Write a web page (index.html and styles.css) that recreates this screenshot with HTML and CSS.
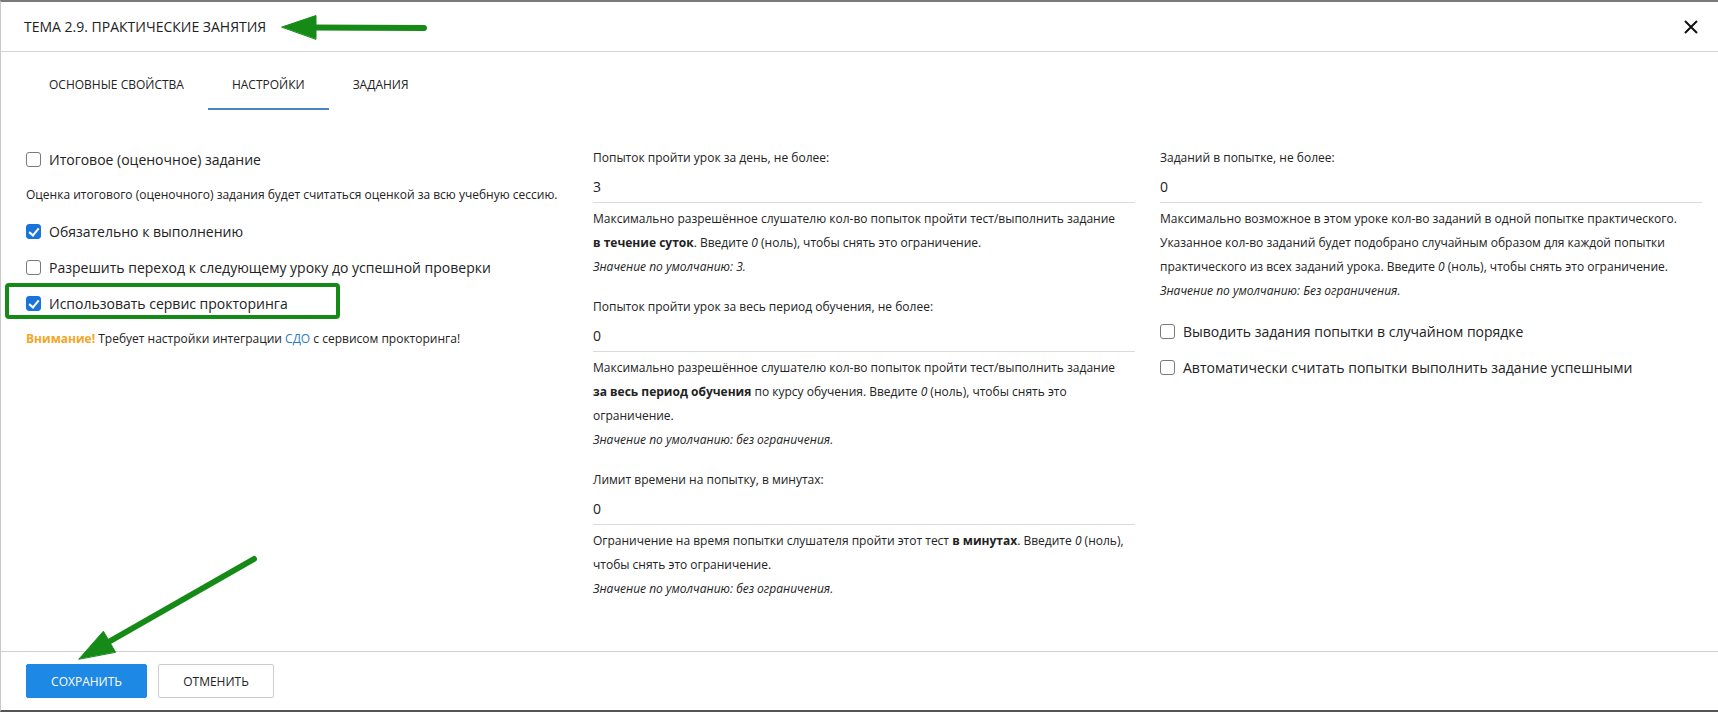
FILE: index.html
```html
<!DOCTYPE html>
<html>
<head>
    <title>Тема 2.9. Практические занятия</title>
    <link rel="stylesheet" href="styles.css">
</head>
<body>
<div class="modal">
    <div class="modal-header">
        <h2>Тема 2.9. Практические занятия</h2>
        <button class="close" type="button">
            <svg width="14" height="14" viewBox="0 0 14 14"><path d="M1 1L13 13M13 1L1 13" stroke="#111" stroke-width="2" fill="none"/></svg>
        </button>
    </div>

    <div class="tabs">
        <div class="tab">Основные свойства</div>
        <div class="tab active">Настройки</div>
        <div class="tab">Задания</div>
    </div>

    <div class="modal-body">
        <div class="col col-left">
            <label class="check"><span class="box"></span>Итоговое (оценочное) задание</label>
            <p class="note">Оценка итогового (оценочного) задания будет считаться оценкой за всю учебную сессию.</p>
            <label class="check"><span class="box checked"></span>Обязательно к выполнению</label>
            <label class="check"><span class="box"></span>Разрешить переход к следующему уроку до успешной проверки</label>
            <label class="check"><span class="box checked"></span>Использовать сервис прокторинга</label>
            <p class="note"><b class="warn">Внимание!</b> Требует настройки интеграции <a href="#">СДО</a> с сервисом прокторинга!</p>
        </div>

        <div class="col">
            <div class="field">
                <div class="field-label">Попыток пройти урок за день, не более:</div>
                <div class="field-value">3</div>
                <div class="field-help">Максимально разрешённое слушателю кол-во попыток пройти тест/выполнить задание <b>в течение суток</b>. Введите <i>0</i> (ноль), чтобы снять это ограничение.</div>
                <div class="field-default">Значение по умолчанию: 3.</div>
            </div>
            <div class="field">
                <div class="field-label">Попыток пройти урок за весь период обучения, не более:</div>
                <div class="field-value">0</div>
                <div class="field-help">Максимально разрешённое слушателю кол-во попыток пройти тест/выполнить задание <b>за весь период обучения</b> по курсу обучения. Введите <i>0</i> (ноль), чтобы снять это ограничение.</div>
                <div class="field-default">Значение по умолчанию: без ограничения.</div>
            </div>
            <div class="field">
                <div class="field-label">Лимит времени на попытку, в минутах:</div>
                <div class="field-value">0</div>
                <div class="field-help">Ограничение на время попытки слушателя пройти этот тест <b>в минутах</b>. Введите <i>0</i> (ноль), чтобы снять это ограничение.</div>
                <div class="field-default">Значение по умолчанию: без ограничения.</div>
            </div>
        </div>

        <div class="col">
            <div class="field">
                <div class="field-label">Заданий в попытке, не более:</div>
                <div class="field-value">0</div>
                <div class="field-help">Максимально возможное в этом уроке кол-во заданий в одной попытке практического. Указанное кол-во заданий будет подобрано случайным образом для каждой попытки практического из всех заданий урока. Введите <i>0</i> (ноль), чтобы снять это ограничение.</div>
                <div class="field-default">Значение по умолчанию: Без ограничения.</div>
            </div>
            <div class="checks">
                <label class="check"><span class="box"></span>Выводить задания попытки в случайном порядке</label>
                <label class="check"><span class="box"></span>Автоматически считать попытки выполнить задание успешными</label>
            </div>
        </div>
    </div>

    <div class="modal-footer">
        <button class="btn btn-primary" type="button">Сохранить</button>
        <button class="btn" type="button">Отменить</button>
    </div>

    <!-- pointer marks drawn on top of the dialog -->
    <svg class="marks" width="1718" height="712" viewBox="0 0 1718 712">
        <g fill="#168a16" stroke="#168a16" stroke-linecap="round" stroke-linejoin="round">
            <line x1="424" y1="28" x2="310" y2="27.5" stroke-width="6"/>
            <polygon points="282,27 316,15.5 316,39" stroke-width="1"/>
            <line x1="254" y1="559" x2="105" y2="644" stroke-width="6"/>
            <polygon points="79,659 103.4,631.2 115.4,652" stroke-width="1"/>
        </g>
        <rect x="7" y="285" width="331" height="32" rx="2" fill="none" stroke="#168a16" stroke-width="4"/>
    </svg>
</div>
</body>
</html>
```

FILE: styles.css
```css
body {
    margin: 0;
    font-family: "Open Sans", "Noto Sans", sans-serif;
    color: #222;
    background-color: #fff;
}
.modal {
    position: relative;
    height: 712px;
    box-sizing: border-box;
    display: flex;
    flex-direction: column;
    border-top: 2px solid #7a7a7a;
    border-bottom: 2px solid #555;
    border-left: 1px solid #c9c9c9;
}
.modal-header {
    height: 49px;
    display: flex;
    align-items: center;
    justify-content: space-between;
    padding: 0 20px 0 23px;
    border-bottom: 1px solid #d4d4d4;
}
.modal-header h2 {
    margin: 0;
    font-size: 14px;
    font-weight: normal;
    text-transform: uppercase;
    color: #222;
}
.close {
    border: none;
    background: none;
    padding: 0;
    width: 14px;
    height: 14px;
    margin-top: 1px;
}
.tabs {
    display: flex;
    padding: 10px 0 0 24px;
}
.tab {
    padding: 0 24px;
    line-height: 46px;
    font-size: 12px;
    text-transform: uppercase;
    border-bottom: 2px solid transparent;
}
.tab.active {
    border-bottom-color: #4a86c0;
}
.modal-body {
    flex: 1;
    display: grid;
    grid-template-columns: repeat(3, 1fr);
    gap: 25px;
    padding: 31px 16px 0 25px;
}
.col {
    padding-top: 7px;
}
.col-left {
    padding-top: 0;
}
.check {
    display: flex;
    align-items: center;
    gap: 8px;
    height: 36px;
    font-size: 14px;
    color: #222;
}
.box {
    width: 13px;
    height: 13px;
    flex: none;
    border: 1px solid #7a7a7a;
    border-radius: 3px;
    background-color: #fff;
    position: relative;
}
.box.checked {
    border-color: #1a73d8;
    background-color: #1a73d8;
}
.box.checked::after {
    content: "";
    position: absolute;
    left: 4px;
    top: 1px;
    width: 4px;
    height: 8px;
    border: solid #fff;
    border-width: 0 2px 2px 0;
    transform: rotate(40deg);
}
.note {
    margin: 0;
    font-size: 12px;
    line-height: 36px;
}
.warn {
    color: #f5a623;
}
.note a {
    color: #2b7bc8;
    text-decoration: none;
}
.field {
    margin-bottom: 18px;
}
.field-label {
    font-size: 12px;
    line-height: 20px;
}
.field-value {
    font-size: 14px;
    line-height: 20px;
    padding: 9px 0 5px;
    border-bottom: 1px solid #dadada;
}
.field-help {
    margin-top: 4px;
    padding-right: 8px;
    font-size: 12px;
    line-height: 24px;
}
.field-help b {
    white-space: nowrap;
}
.field-default {
    font-size: 12px;
    line-height: 24px;
    font-style: italic;
}
.checks {
    margin-top: -8px;
}
.modal-footer {
    display: flex;
    gap: 11px;
    padding: 12px 25px;
    border-top: 1px solid #d0d0d0;
}
.btn {
    height: 34px;
    width: 116px;
    border: 1px solid #ccc;
    border-radius: 2px;
    background-color: #fff;
    color: #222;
    font-family: inherit;
    font-size: 12px;
    text-transform: uppercase;
}
.btn-primary {
    width: 121px;
    border-color: #1e88e5;
    background-color: #1e88e5;
    color: #fff;
}
.marks {
    position: absolute;
    top: -2px;
    left: -1px;
    pointer-events: none;
}
```
